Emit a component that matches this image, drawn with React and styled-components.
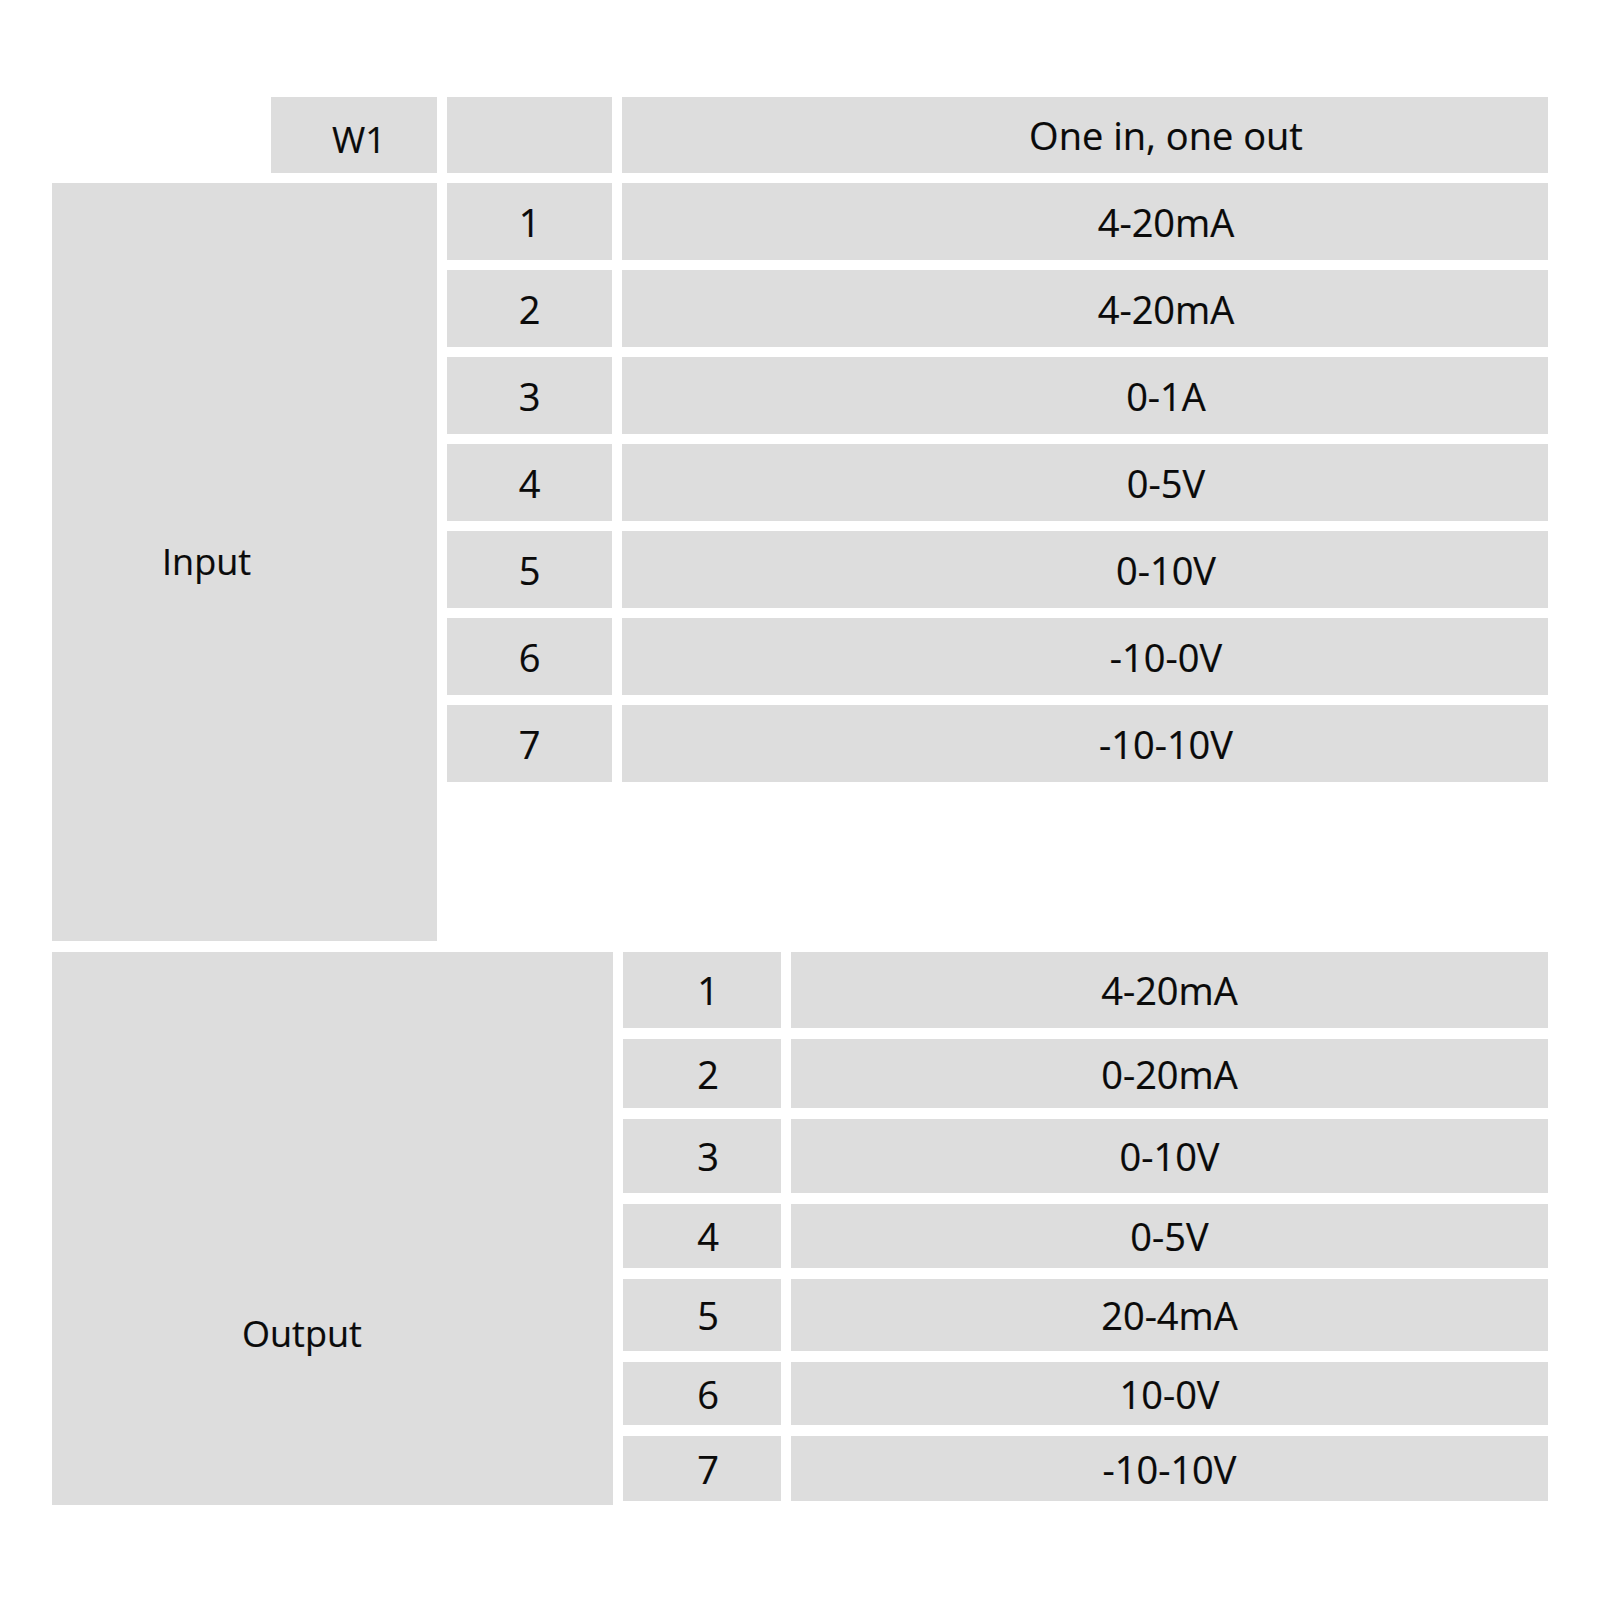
import React from 'react'
import styled, { createGlobalStyle } from 'styled-components'

const GlobalStyle = createGlobalStyle`
  html, body {
    margin: 0;
    padding: 0;
    background: #ffffff;
  }
  body {
    font-family: 'Open Sans', 'Noto Sans', 'Liberation Sans', sans-serif;
    color: #0a0a0a;
  }
`

const Page = styled.div`
  width: 1600px;
  height: 1600px;
  box-sizing: border-box;
  padding: 97px 0 0 52px;
  background: #ffffff;
`

const TopGrid = styled.div`
  display: grid;
  grid-template-columns: 385px 165px 926px;
  grid-template-rows: 76px repeat(7, 77px) 149px;
  gap: 10px;
`

const BottomGrid = styled.div`
  display: grid;
  grid-template-columns: 561px 158px 757px;
  grid-template-rows: 76px 69px 74px 64px 72px 63px 65px;
  column-gap: 10px;
  row-gap: 11px;
  margin-top: 11px;
`

const Cell = styled.div`
  background: #dddddd;
  display: flex;
  align-items: center;
  justify-content: center;
  font-size: ${(p) => (p.$small ? 36 : 38)}px;
  font-weight: 500;
  -webkit-text-stroke: 0.2px #0a0a0a;
  line-height: 52px;
  white-space: nowrap;
  box-sizing: border-box;
  padding-left: ${(p) => p.$shift || 0}px;
`

const CornerCell = styled(Cell)`
  justify-self: end;
  width: 166px;
  padding-top: 10px;
`

const GroupLabel = styled(Cell)`
  grid-column: 1;
  grid-row: ${(p) => p.$rows};
  justify-content: flex-start;
  align-items: ${(p) => (p.$top ? 'flex-start' : 'center')};
  padding-left: ${(p) => p.$left}px;
  padding-top: ${(p) => p.$top || 0}px;
  margin-bottom: ${(p) => p.$extend || 0}px;
`

const inputs = ['4-20mA', '4-20mA', '0-1A', '0-5V', '0-10V', '-10-0V', '-10-10V']
const outputs = ['4-20mA', '0-20mA', '0-10V', '0-5V', '20-4mA', '10-0V', '-10-10V']

export default function App() {
  return (
    <>
      <GlobalStyle />
      <Page>
        <TopGrid>
          <CornerCell $shift={10} $small>W1</CornerCell>
          <Cell />
          <Cell $shift={162}>One in, one out</Cell>
          <GroupLabel $rows="2 / 10" $left={110} $small>Input</GroupLabel>
          {inputs.map((v, i) => (
            <React.Fragment key={'in' + i}>
              <Cell>{i + 1}</Cell>
              <Cell $shift={162}>{v}</Cell>
            </React.Fragment>
          ))}
        </TopGrid>
        <BottomGrid>
          <GroupLabel $rows="1 / 8" $left={190} $top={356} $extend={-4} $small>Output</GroupLabel>
          {outputs.map((v, i) => (
            <React.Fragment key={'out' + i}>
              <Cell $shift={12}>{i + 1}</Cell>
              <Cell $shift={-6}>{v}</Cell>
            </React.Fragment>
          ))}
        </BottomGrid>
      </Page>
    </>
  )
}
